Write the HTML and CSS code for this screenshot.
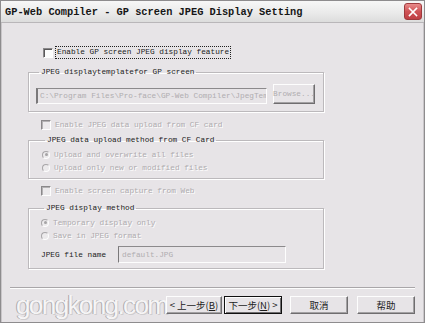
FILE: index.html
```html
<!DOCTYPE html>
<html lang="en">
<head>
  <meta charset="UTF-8">
  <meta name="viewport" content="width=device-width, initial-scale=1.0">
  <title>GP-Web Compiler - GP screen JPEG Display Setting</title>
  <link rel="stylesheet" href="styles.css">
</head>
<body>

  <div class="window">
    <div class="titlebar">
      <span class="title">GP-Web Compiler - GP screen JPEG Display Setting</span>
      <span class="close">
        <svg width="10" height="10" viewBox="0 0 10 10">
          <path d="M1.5 1.5 L8.5 8.5 M8.5 1.5 L1.5 8.5" stroke="#fff" stroke-width="1.6" stroke-linecap="square"/>
        </svg>
      </span>
    </div>

    <div class="client">
      <div class="check-row first">
        <span class="checkbox"></span>
        <span class="focus">Enable GP screen JPEG display feature</span>
      </div>

      <fieldset class="group g1">
        <legend>JPEG displaytemplatefor GP screen</legend>
        <div class="path-row">
          <span class="field path">C:\Program Files\Pro-face\GP-Web Compiler\JpegTem</span>
          <span class="btn browse">Browse...</span>
        </div>
      </fieldset>

      <div class="check-row disabled">
        <span class="checkbox off"></span>
        <span>Enable JPEG data upload from CF card</span>
      </div>

      <fieldset class="group g2">
        <legend>JPEG data upload method from CF Card</legend>
        <div class="radio-row disabled">
          <span class="radio on"></span>
          <span>Upload and overwrite all files</span>
        </div>
        <div class="radio-row disabled">
          <span class="radio"></span>
          <span>Upload only new or modified files</span>
        </div>
      </fieldset>

      <div class="check-row disabled">
        <span class="checkbox off"></span>
        <span>Enable screen capture from Web</span>
      </div>

      <fieldset class="group g3">
        <legend>JPEG display method</legend>
        <div class="radio-row disabled">
          <span class="radio on"></span>
          <span>Temporary display only</span>
        </div>
        <div class="radio-row disabled">
          <span class="radio"></span>
          <span>Save in JPEG format</span>
        </div>
        <div class="file-row">
          <span class="file-label">JPEG file name</span>
          <span class="field filename">default.JPG</span>
        </div>
      </fieldset>

      <div class="separator"></div>

      <div class="footer">
        <span class="watermark">gongkong.com</span>
        <span class="btn wide prev">&lt; 上一步(<u>B</u>)</span>
        <span class="btn wide next">下一步(<u>N</u>) &gt;</span>
        <span class="btn wide cancel">取消</span>
        <span class="btn wide help">帮助</span>
      </div>
    </div>
  </div>

</body>
</html>
```

FILE: styles.css
```css
body {
  margin: 0;
  padding: 0;
  background: #e7e4e7;
}

.window {
  width: 425px;
  height: 323px;
  box-sizing: border-box;
  border: 1px solid #8e8c8e;
  background: #e7e4e7;
  display: flex;
  flex-direction: column;
  overflow: hidden;
  font-family: "Liberation Mono", "DejaVu Sans Mono", monospace;
  font-size: 7.75px;
  color: #1c1c1c;
}

.titlebar {
  height: 21px;
  flex: none;
  display: flex;
  align-items: center;
  justify-content: space-between;
  padding: 0 2px 0 4px;
  background: linear-gradient(#f7f7f7, #e9e9e9 60%, #dcdcdc);
  border-bottom: 1px solid #b9b6b9;
}

.title {
  font-weight: bold;
  font-size: 10.33px;
  color: #161616;
}

.close {
  width: 18px;
  height: 17px;
  box-sizing: border-box;
  border: 1px solid #9e3a3d;
  border-radius: 3px;
  background: linear-gradient(#e98b8b, #cf5356 50%, #bf3f43);
  display: flex;
  align-items: center;
  justify-content: center;
}

.client {
  flex: 1;
  display: flex;
  flex-direction: column;
  box-shadow: inset 1px 0 0 #c9c6c9, inset -1px 0 0 #c9c6c9;
}

.check-row {
  display: flex;
  align-items: center;
  height: 12px;
  margin-top: 7px;
  padding-left: 40px;
  gap: 4px;
}

.check-row.first {
  height: 13px;
  margin-top: 23px;
  padding-left: 42px;
  gap: 2px;
}

.checkbox {
  width: 10px;
  height: 10px;
  box-sizing: border-box;
  border-top: 1px solid #8a888a;
  border-left: 1px solid #8a888a;
  border-right: 1px solid #fdfdfd;
  border-bottom: 1px solid #fdfdfd;
  background: #fcfcfc;
  box-shadow: inset 1px 1px 0 #5a585a;
}

.checkbox.off {
  background: #eceaec;
  box-shadow: inset 1px 1px 0 #b4b2b4;
}

.focus {
  border: 1px dotted #202020;
  padding: 1px;
  line-height: 9px;
}

.disabled {
  color: #aeabae;
  text-shadow: 1px 1px 0 #ffffff;
}

.group {
  margin: 8px 0 0 27px;
  width: 296px;
  box-sizing: border-box;
  padding: 0;
  min-width: 0;
  border: 1px solid #bcb9bc;
  box-shadow: 1px 1px 0 #ffffff, inset 1px 1px 0 #ffffff;
}

.group legend {
  margin-left: 3px;
  padding: 0 2px;
  line-height: 10px;
  color: #1c1c1c;
}

.g1 {
  padding: 7px 0 7px 7px;
}

.g2 {
  margin-top: 4px;
  padding: 3px 0 4px 13px;
}

.g3 {
  margin-top: 6px;
  padding: 3px 0 5px 12px;
}

.g2 + .check-row {
  margin-top: 6px;
}

.path-row {
  display: flex;
  align-items: flex-end;
  gap: 6px;
}

.field {
  box-sizing: border-box;
  display: flex;
  align-items: center;
  padding-left: 2px;
  background: #e7e4e7;
  border-top: 1px solid #8c8a8c;
  border-left: 2px solid #7a787a;
  border-right: 1px solid #fdfdfd;
  border-bottom: 1px solid #fdfdfd;
  color: #b0adb0;
  white-space: nowrap;
  overflow: hidden;
}

.path {
  width: 231px;
  height: 16px;
}

.btn {
  box-sizing: border-box;
  display: flex;
  align-items: center;
  justify-content: center;
  background: #e7e4e7;
  border-top: 1px solid #fdfdfd;
  border-left: 1px solid #fdfdfd;
  border-right: 1px solid #6f6d6f;
  border-bottom: 1px solid #6f6d6f;
  box-shadow: inset -1px -1px 0 #a3a1a3;
  white-space: nowrap;
}

.browse {
  width: 42px;
  height: 20px;
  color: #b0adb0;
}

.radio-row {
  display: flex;
  align-items: center;
  height: 13px;
  gap: 4px;
}

.radio {
  width: 8px;
  height: 8px;
  box-sizing: border-box;
  border-radius: 50%;
  border: 1px solid #a8a6a8;
  border-right-color: #fdfdfd;
  border-bottom-color: #fdfdfd;
  background: #eceaec;
  display: flex;
  align-items: center;
  justify-content: center;
}

.radio.on::after {
  content: "";
  width: 3px;
  height: 3px;
  border-radius: 50%;
  background: #a6a4a6;
}

.file-row {
  display: flex;
  align-items: center;
  margin-top: 4px;
}

.file-label {
  width: 77px;
  padding-top: 1px;
}

.filename {
  width: 168px;
  height: 17px;
  border-left-width: 1px;
  padding-left: 3px;
}

.separator {
  margin: 18px 9px 0 9px;
  height: 1px;
  background: #a9a6a9;
  border-bottom: 1px solid #fdfdfd;
}

.footer {
  display: flex;
  align-items: center;
  margin-top: 7px;
  padding-left: 15px;
  height: 18px;
  font-family: "Noto Sans CJK SC", "DejaVu Sans", sans-serif;
  font-size: 9.5px;
  color: #1c1c1c;
}

.watermark {
  width: 150px;
  line-height: 18px;
  font-family: "Liberation Sans", Arial, sans-serif;
  font-size: 26px;
  letter-spacing: -1.6px;
  color: #f6f5f6;
  text-shadow: -1px 0 0 #a9a7a9, 1px 1px 0 #cfcdcf;
}

.btn.wide {
  height: 18px;
  width: 58px;
}

.btn.prev {
  width: 56px;
}

.btn.next {
  margin-left: 2px;
  border: 1px solid #101010;
  box-shadow: inset 1px 1px 0 #fdfdfd, inset -1px -1px 0 #6f6d6f;
}

.cancel {
  margin-left: 8px;
}

.help {
  margin-left: 9px;
}
```
